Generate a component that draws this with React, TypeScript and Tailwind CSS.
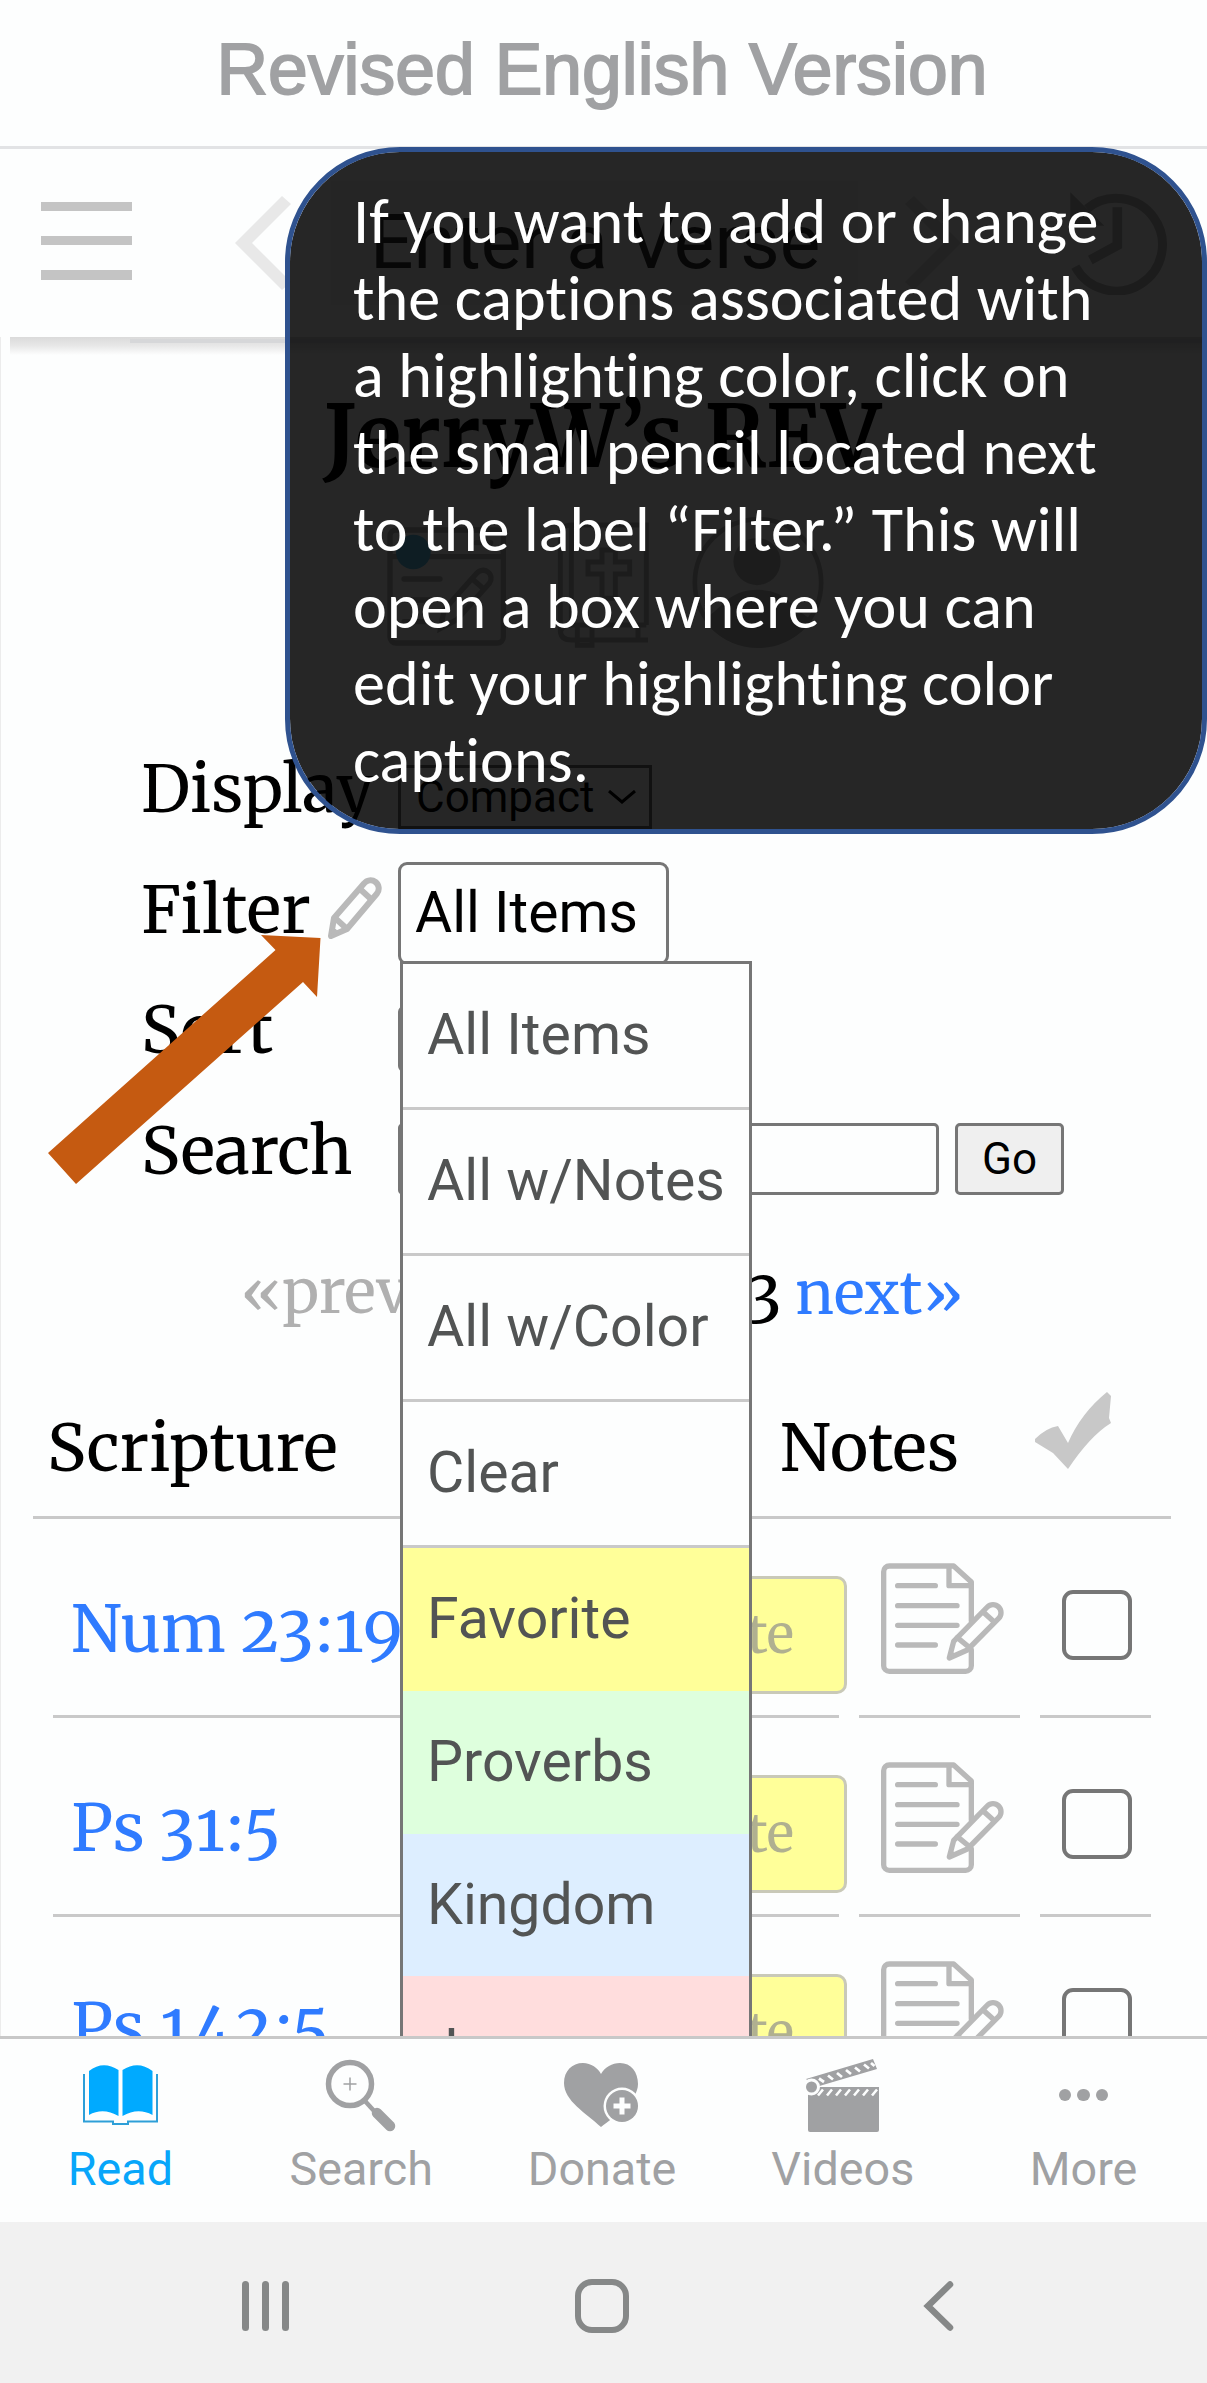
import type { ReactNode } from "react";

const filterOptions = [
  { label: "All Items", className: "h-[146px] border-b-[3px] border-[#c9c9c9] bg-[#fdfefe]" },
  { label: "All w/Notes", className: "h-[146px] border-b-[3px] border-[#c9c9c9] bg-[#fdfefe]" },
  { label: "All w/Color", className: "h-[146px] border-b-[3px] border-[#c9c9c9] bg-[#fdfefe]" },
  { label: "Clear", className: "h-[146px] border-b-[3px] border-[#c9c9c9] bg-[#fdfefe]" },
  { label: "Favorite", className: "h-[142.8px] bg-[#ffff99]" },
  { label: "Proverbs", className: "h-[142.8px] bg-[#deffdd]" },
  { label: "Kingdom", className: "h-[142.8px] bg-[#ddeeff]" },
  { label: "Jesus", className: "h-[142.8px] bg-[#ffdddd] pt-[2px]" },
];

const verses = [
  { book: "Num", verse: "23:19" },
  { book: "Ps", verse: "31:5" },
  { book: "Ps", verse: "142:5" },
];

const calloutLines = [
  "If you want to add or change",
  "the captions associated with",
  "a highlighting color, click on",
  "the small pencil located next",
  "to the label “Filter.” This will",
  "open a box where you can",
  "edit your highlighting color",
  "captions.",
];

function PencilIcon() {
  return (
    <svg width="54" height="62" viewBox="0 0 54 62" fill="none" stroke="#b9b9b9" strokeWidth="6" strokeLinejoin="round">
      <path d="M3 59 L6 41 L36 6.500 A8 8 0 0 1 49 16.500 L19 52 Z" />
      <path d="M32 12 L44 23 M7 41 L18 51" />
      <path d="M2.500 59.500 L4 50 L11 55 Z" fill="#b9b9b9" strokeWidth="1" />
    </svg>
  );
}

function NoteIcon() {
  return (
    <svg width="123" height="111" viewBox="93 67 369 333" fill="none" stroke="#b9b9b9" strokeWidth="16" strokeLinecap="round" strokeLinejoin="round">
      <path d="M364 240 V124 L311 76 H118 A17 17 0 0 0 101 93 V375 A17 17 0 0 0 118 392 H347 A17 17 0 0 0 364 375 V328" />
      <path d="M297 78 V135 H362" />
      <path d="M143 135 H256 M143 195 H321 M143 254 H321 M143 313 H256" />
      <path d="M298 352 L311 302 L412 199 A24 24 0 0 1 446 233 L352 328 Z" />
      <path d="M402 216 L432 243 M322 291 L360 322" />
      <path d="M298 352 L302 332 L318 344 Z" fill="#b9b9b9" strokeWidth="4" />
    </svg>
  );
}

function ScriptureToolIcons() {
  return (
    <div className="mt-[29px] flex h-[133px] items-end pl-[387px]">
      <svg className="mb-[3px]" width="119" height="119" viewBox="51 111 357 357" fill="none" stroke="#bbbbbb" strokeWidth="16" strokeLinecap="round">
        <rect x="60" y="120" width="340" height="339" rx="18" />
        <path d="M62 200 H398 M102 267 H210 M102 330 H180 M102 395 H165 M318 158 H362" />
        <path d="M212 415 L222 360 L320 250 A24 24 0 0 1 358 280 L262 388 Z M308 268 L338 294" />
        <circle cx="130" cy="186" r="52" fill="#60c0e8" stroke="none" />
      </svg>
      <svg className="mb-[1px] ml-[51px]" width="92" height="126" viewBox="557 96 276 378" fill="none" stroke="#bbbbbb" strokeWidth="15">
        <path d="M825 405 V105 H600 Q567 105 567 140 V425 Q570 450 600 450 H830 M567 425 Q575 405 600 405 H825 M600 105 V405" />
        <path d="M692 180 H732 V216 H775 V252 H732 V325 H692 V252 H650 V216 H692 Z M618 405 V466 H662 V405 M800 405 V450" />
      </svg>
      <svg className="ml-[43px]" width="132" height="133" viewBox="965 78 396 400" fill="#bbbbbb">
        <circle cx="1163" cy="278" r="190" fill="none" stroke="#bbbbbb" strokeWidth="14" />
        <circle cx="1160" cy="215" r="71" />
        <path d="M1000 390 Q1030 370 1060 340 Q1100 300 1163 300 Q1226 300 1262 340 Q1295 375 1326 390 Q1270 470 1163 470 Q1056 470 1000 390 Z" />
      </svg>
    </div>
  );
}

function Tab({ label, active = false, children }: { label: string; active?: boolean; children: ReactNode }) {
  return (
    <div className={active ? "flex flex-1 flex-col items-center text-[#08a6fa]" : "flex flex-1 flex-col items-center text-[#a0a1a3]"}>
      <div className="flex h-[112px] items-center justify-center">{children}</div>
      <span className="text-[46.700px] leading-[37px]">{label}</span>
    </div>
  );
}

function TabBar() {
  return (
    <nav className="flex h-[186px] shrink-0 border-t-[3px] border-[#c8c8c8] bg-[#fdfefe] pr-[3px] font-['Roboto',sans-serif]">
      <Tab label="Read" active>
        <svg width="75" height="60" viewBox="0 0 75 60" fill="#00aaff">
          <path d="M6 6 Q20 -5 35.500 5 V51 Q20 42 6 50 Z M39.500 5 Q55 -5 69.500 6 V50 Q55 42 39.500 51 Z" />
          <path d="M1 9 V56.500 H30 V59 H45 V56.500 H74 V9" fill="none" stroke="#2e9fd8" strokeWidth="2" />
        </svg>
      </Tab>
      <Tab label="Search">
        <svg width="73" height="73" viewBox="0 0 73 73" fill="none" stroke="#a0a1a3">
          <circle cx="25" cy="25" r="21.500" strokeWidth="5.500" />
          <path d="M25 18.500 V31.500 M18.500 25 H31.500" strokeWidth="1.500" />
          <path d="M40 42 L50 53" strokeWidth="4.500" />
          <path d="M52 54 L65 67" strokeWidth="10.500" strokeLinecap="round" />
        </svg>
      </Tab>
      <Tab label="Donate">
        <svg width="75" height="64" viewBox="0 0 75 64" fill="#a0a1a3">
          <path d="M37 64 C22 50 0 38 0 20 C0 8 8 0 19 0 C27 0 34 5 37 11 C41 4 48 0 56 0 C67 0 74 9 74 21 C74 38 50 54 37 64 Z" />
          <circle cx="58" cy="43" r="18.500" fill="#fdfefe" />
          <circle cx="58" cy="43" r="16" />
          <path d="M58 34.500 V51.500 M49.500 43 H66.500" stroke="#fdfefe" strokeWidth="5" />
        </svg>
      </Tab>
      <Tab label="Videos">
        <svg width="74" height="73" viewBox="0 0 74 73" fill="#a0a1a3">
          <path d="M2 28 H73 V71 Q73 73 71 73 H4 Q2 73 2 71 Z" />
          <path d="M12 36.500 L17 30.500 M21 36.500 L26 30.500 M30 36.500 L35 30.500 M39 36.500 L44 30.500 M48 36.500 L53 30.500 M57 36.500 L62 30.500 M66 36.500 L71 30.500" stroke="#fdfefe" strokeWidth="2.600" />
          <path d="M0 20 L67 0 L71 10 L10 28 Z" />
          <path d="M13 19.500 L18 23 M22 16.500 L27 20.500 M31 14 L36 18 M40 11 L45 15 M49 8.500 L54 12.500 M58 5.500 L63 9.500 M65 4 L68.500 7" stroke="#fdfefe" strokeWidth="2.800" />
          <circle cx="5.500" cy="28" r="8.500" fill="#fdfefe" />
          <circle cx="5.500" cy="28" r="5.500" />
        </svg>
      </Tab>
      <Tab label="More">
        <div className="flex gap-[6px]">
          <i className="size-[12.500px] rounded-full bg-[#a0a1a3]" />
          <i className="size-[12.500px] rounded-full bg-[#a0a1a3]" />
          <i className="size-[12.500px] rounded-full bg-[#a0a1a3]" />
        </div>
      </Tab>
    </nav>
  );
}

function SystemBar() {
  return (
    <div className="flex h-[161px] shrink-0 items-center bg-[#f1f1f1] pt-[7px]">
      <div className="ml-[242px] flex w-[47px] justify-between">
        <i className="h-[50px] w-[7px] rounded-full bg-[#868888]" />
        <i className="h-[50px] w-[7px] rounded-full bg-[#868888]" />
        <i className="h-[50px] w-[7px] rounded-full bg-[#868888]" />
      </div>
      <div className="ml-[286px] size-[54px] rounded-[17px] border-[6.500px] border-[#868888]" />
      <svg className="ml-[294px]" width="31" height="52" viewBox="0 0 31 52" fill="none" stroke="#868888" strokeWidth="6.500" strokeLinecap="round">
        <path d="M27 4.500 L5 26 L27 47.500" />
      </svg>
    </div>
  );
}

function NavigationBar() {
  return (
    <div className="relative z-10 flex h-[188px] shrink-0 items-center bg-[#fdfefe]">
      <div className="mb-[5px] ml-[41px] flex h-[78px] w-[91px] flex-col justify-between">
        <i className="h-[9.500px] bg-[#c4c4c4]" />
        <i className="h-[9.500px] bg-[#c4c4c4]" />
        <i className="h-[9.500px] bg-[#c4c4c4]" />
      </div>
      <svg className="ml-[103px]" width="56" height="94" viewBox="0 0 56 94" fill="#e8e8e8">
        <path d="M0 47 L47 0 L56 8 L17 47 L56 86 L47 94 Z" />
      </svg>
      <div className="ml-[40px] h-[124px] w-[527px] bg-[#f8f8f8] pl-[39px] font-['Roboto',sans-serif] text-[76.500px] leading-[122px] text-[#333]">
        Enter a Verse
      </div>
      <svg className="ml-[47px]" width="56" height="94" viewBox="0 0 56 94" fill="#e0e0e0">
        <path d="M56 47 L9 0 L0 8 L39 47 L0 86 L9 94 Z" />
      </svg>
      <svg className="ml-[109px]" width="98" height="103" viewBox="539 62 294 309" fill="none" stroke="#bbbbbb">
        <path d="M555 286 A139 139 0 1 0 590 112" strokeWidth="27" />
        <path d="M540 63 L642 163 H540 Z" fill="#bbbbbb" stroke="none" />
        <path d="M681 108 V222 L600 266" strokeWidth="29" />
      </svg>
      <div className="absolute top-full right-0 left-[10px] h-[18px] bg-gradient-to-b from-[#dadada] via-[#e8e8e8] to-transparent" />
      <div className="absolute top-full right-0 left-[130px] mt-[2px] h-[4px] bg-[#d6d7d9]" />
    </div>
  );
}

function FilterForm() {
  return (
    <section className="mt-[80px] text-[65.300px]">
      <div className="flex h-[120.700px] items-center">
        <span className="w-[257px] leading-[79px]">Display</span>
        <div className="mt-[15px] flex h-[64px] w-[254px] items-center border-[3px] border-[#767676] pl-[15px] font-['Roboto',sans-serif] text-[44px]">
          Compact
          <svg className="ml-[14px]" width="28" height="14" viewBox="0 0 28 14" fill="none" stroke="#000" strokeWidth="3">
            <path d="M1 1 L14 12 L27 1" />
          </svg>
        </div>
      </div>
      <div className="flex h-[120.700px] items-center">
        <div className="flex w-[257px] items-center pr-[16px] leading-[79px]">
          <span className="mr-auto tracking-[0.5px]">Filter</span>
          <span className="mb-[4px] flex"><PencilIcon /></span>
        </div>
        <div className="relative mt-[7px] h-[103px] w-[271px]">
          <div className="h-[103px] rounded-[9px] border-[3px] border-[#767676] pl-[14px] font-['Roboto',sans-serif] text-[57px] leading-[96px]">All Items</div>
          <div className="absolute top-[99px] left-[2px] z-20 w-[352px] border-[3px] border-[#767676] font-['Roboto',sans-serif] text-[57.200px] text-[#525454]">
            {filterOptions.map((option) => (
              <div key={option.label} className={option.className}>
                <div className="flex h-[142px] items-center pl-[24px]">{option.label}</div>
              </div>
            ))}
          </div>
        </div>
      </div>
      <div className="flex h-[120.700px] items-center">
        <span className="w-[257px] leading-[79px]">Sort</span>
        <div className="mt-[16px] h-[66px] w-[254px] rounded-[6px] border-[3px] border-[#767676] bg-[#767676]" />
      </div>
      <div className="flex h-[120.700px] items-center">
        <span className="w-[257px] leading-[79px]">Search</span>
        <div className="mt-[16px] h-[72px] w-[541px] rounded-[5px] border-[3px] border-l-[8px] border-[#767676]" />
        <div className="mt-[16px] ml-[16px] flex h-[72px] w-[109px] items-center justify-center rounded-[5px] border-[3px] border-[#767676] bg-[#efefef] font-['Roboto',sans-serif] text-[44px]">Go</div>
      </div>
    </section>
  );
}

function VerseRow({ book, verse }: { book: string; verse: string }) {
  return (
    <div className="ml-[53px] grid h-[199.300px] grid-cols-[327px_439px_161px_111px] gap-x-[20px]">
      <div className="-mr-[20px] border-b-[3px] border-[#c9c9c9] pt-[70px] pl-[18px] text-[65.300px] leading-[80px] whitespace-nowrap text-[#2f7bff]">
        {book} <span className="tracking-[3px]">{verse}</span>
      </div>
      <div className="flex items-start justify-end border-b-[3px] border-[#c9c9c9]">
        <div className="mt-[57px] -mr-[8px] h-[118px] w-[310px] rounded-[10px] border-[3px] border-[#c9c9b8] bg-[#ffff99] pr-[50px] text-right text-[52px] leading-[112px] text-[#b0b090]">Favorite</div>
      </div>
      <div className="border-b-[3px] border-[#c9c9c9] pt-[44px] pl-[22px]"><NoteIcon /></div>
      <div className="border-b-[3px] border-[#c9c9c9] pt-[71px] pl-[22px]">
        <div className="size-[70px] rounded-[11px] border-[4px] border-[#767676]" />
      </div>
    </div>
  );
}

function Callout() {
  return (
    <aside className="absolute top-[147px] left-[285px] z-30 h-[687px] w-[922px] rounded-[115px] border-[5px] border-[#2f528f] bg-black/85 bg-clip-padding pt-[31px] pl-[63px] font-['Carlito','Lato',sans-serif] text-[64.200px] leading-[77px] text-white [font-variant-ligatures:none]">
      {calloutLines.map((line) => (
        <span key={line} className="block whitespace-nowrap">{line}</span>
      ))}
    </aside>
  );
}

export default function App() {
  return (
    <div className="relative flex h-[2383px] w-[1207px] flex-col overflow-hidden bg-[#fdfefe] text-black">
      <header className="h-[149px] shrink-0 border-b-[3px] border-[#e2e3e5] pr-[3px] text-center font-['Liberation_Sans',sans-serif] text-[71.500px] leading-[138px] text-[#a0a1a3] [-webkit-text-stroke:1.800px_#a0a1a3]">
        Revised English Version
      </header>
      <NavigationBar />
      <main className="min-h-0 flex-1 overflow-hidden border-l border-[#ececec] font-['Merriweather','DejaVu_Serif',serif] oldstyle-nums">
        <div className="-ml-px">
          <h1 className="mt-[50px] pr-[3px] text-center text-[85.500px] leading-[100px] font-bold">JerryW’s REV</h1>
          <ScriptureToolIcons />
          <div className="pl-[141px]"><FilterForm /></div>
          <div className="flex h-[168px] justify-between pr-[244px] pl-[241px] text-[58.500px] leading-[160px]">
            <span className="text-[60px] text-[#b0b0b0]">«prev</span>
            <span><span className="mr-[1px] text-[62px]">3</span> <span className="text-[#2f7bff]">next»</span></span>
          </div>
          <div className="mr-[36px] ml-[33px] flex h-[139px] border-b-[3px] border-[#c9c9c9] text-[65.300px] leading-[136px]">
            <span className="w-[747px] pl-[14px]">Scripture</span>
            <span className="w-[255px]">Notes</span>
            <svg className="mt-[12px] shrink-0" width="76" height="77" viewBox="1037 1391 76 77" fill="#c8c8c8">
              <path d="M1037 1438 Q1048 1427 1060 1425 L1070 1442 Q1083 1412 1109 1391 L1113 1395 L1111 1417 L1113 1422 Q1092 1435 1070 1468 L1055 1452 L1037 1441 Z" />
            </svg>
          </div>
          {verses.map(({ book, verse }) => <VerseRow key={verse} book={book} verse={verse} />)}
        </div>
      </main>
      <TabBar />
      <SystemBar />
      <Callout />
      <svg className="absolute top-[930px] left-[40px] z-30" width="290" height="260" viewBox="40 930 290 260" fill="#c55a11">
        <path d="M48 1153 L275.500 950 L261 935 L320.500 938 L317 997 L303 982 L76 1184 Z" />
      </svg>
    </div>
  );
}
